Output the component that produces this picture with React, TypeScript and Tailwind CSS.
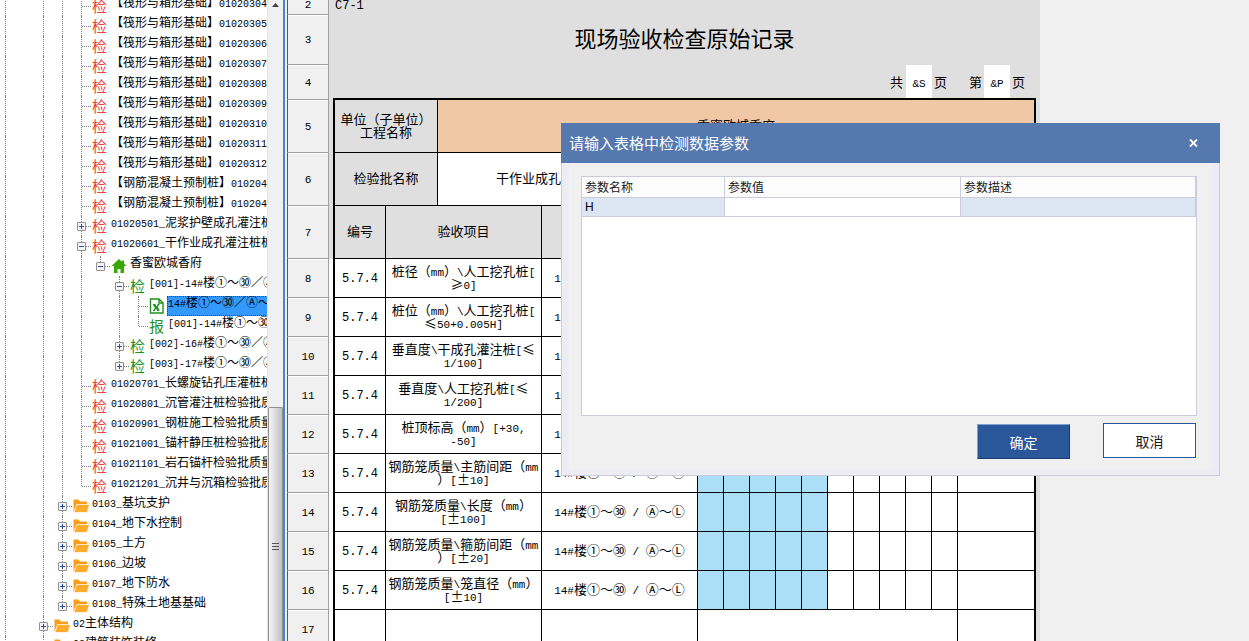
import { Fragment } from "react"
import type { ReactNode } from "react"

type Icon = "red" | "green" | "report" | "excel" | "home" | "folder"

type Node = {
    text: string
    icon: Icon
    level: number
    guides: number[]
    toggle?: "plus" | "minus"
    last?: boolean
    selected?: boolean
}

const check = (text: string, extra: Partial<Node> = {}): Node => ({
    text, icon: "red", level: 4, guides: [0, 2, 3], ...extra,
})

const folder = (text: string, extra: Partial<Node> = {}): Node => ({
    text, icon: "folder", level: 3, guides: [0, 2], toggle: "plus", ...extra,
})

const nodes: Node[] = [
    check("【筏形与箱形基础】01020304"),
    check("【筏形与箱形基础】01020305"),
    check("【筏形与箱形基础】01020306"),
    check("【筏形与箱形基础】01020307"),
    check("【筏形与箱形基础】01020308"),
    check("【筏形与箱形基础】01020309"),
    check("【筏形与箱形基础】01020310"),
    check("【筏形与箱形基础】01020311"),
    check("【筏形与箱形基础】01020312"),
    check("【钢筋混凝土预制桩】010204"),
    check("【钢筋混凝土预制桩】010204"),
    check("01020501_泥浆护壁成孔灌注桩", { toggle: "plus" }),
    check("01020601_干作业成孔灌注桩桩", { toggle: "minus" }),
    { text: "香蜜欧城香府", icon: "home", level: 5, guides: [0, 2, 3, 4], toggle: "minus", last: true },
    { text: "[001]-14#楼①～㉚／Ⓐ～Ⓛ", icon: "green", level: 6, guides: [0, 2, 3, 4], toggle: "minus" },
    { text: "14#楼①～㉚／Ⓐ～Ⓛ", icon: "excel", level: 7, guides: [0, 2, 3, 4, 6], selected: true },
    { text: "[001]-14#楼①～㉚", icon: "report", level: 7, guides: [0, 2, 3, 4, 6], last: true },
    { text: "[002]-16#楼①～㉚／Ⓐ～Ⓛ", icon: "green", level: 6, guides: [0, 2, 3, 4], toggle: "plus" },
    { text: "[003]-17#楼①～㉚／Ⓐ～Ⓛ", icon: "green", level: 6, guides: [0, 2, 3, 4], toggle: "plus", last: true },
    check("01020701_长螺旋钻孔压灌桩桩"),
    check("01020801_沉管灌注桩检验批质"),
    check("01020901_钢桩施工检验批质量"),
    check("01021001_锚杆静压桩检验批质"),
    check("01021101_岩石锚杆检验批质量"),
    check("01021201_沉井与沉箱检验批质", { last: true }),
    folder("0103_基坑支护"),
    folder("0104_地下水控制"),
    folder("0105_土方"),
    folder("0106_边坡"),
    folder("0107_地下防水"),
    folder("0108_特殊土地基基础", { last: true }),
    folder("02主体结构", { level: 2, guides: [0] }),
    folder("03建筑装饰装修", { level: 2, guides: [0] }),
]

// Half-width runs get the mono face, so that two of them fill one full-width cell
const Mixed = ({ text, size = "text-[10px]" }: { text: string; size?: string }) => (
    <>
        {text.split(/([\x20-\x7e]+)/).map((part, i) =>
            i % 2 ? (
                <span key={i} className={`font-['Liberation_Mono',monospace] leading-0 whitespace-pre ${size}`}>{part}</span>
            ) : (
                <Fragment key={i}>{part}</Fragment>
            )
        )}
    </>
)

const NodeIcon = ({ icon }: { icon: Icon }) => {
    if (icon === "red") return <span className="text-[15px] leading-4 text-[#f03c3c]">检</span>
    if (icon === "green") return <span className="text-[15px] leading-4 text-[#1f8f1f]">检</span>
    if (icon === "report") return <span className="text-[15px] leading-4 text-[#1f8f1f]">报</span>
    if (icon === "home") {
        return (
            <svg width="16" height="16" viewBox="0 0 16 16" fill="#39a900" aria-hidden="true">
                <path d="M8 1 0.5 8H3v7h3.5v-4h3v4H13V8h2.5L13 5.6V2.5h-2v1.3z" />
            </svg>
        )
    }
    if (icon === "excel") {
        return (
            <svg width="16" height="16" viewBox="0 0 16 16" fill="none" stroke="#1f8f1f" aria-hidden="true">
                <path d="M1.5 1h8.500L14 5V15H1.500zM10 1v4H14" fill="#fff" strokeWidth="1.400" />
                <path d="M5 7l4.500 5" strokeWidth="2.200" />
                <path d="M9.500 7l-4.500 5" strokeWidth="1.200" />
                <path d="M4 6.500h2.500M8.500 6.500h2M4 12.500h2M8 12.500h2.500" />
            </svg>
        )
    }
    return (
        <svg width="17" height="16" viewBox="0 0 17 16" aria-hidden="true">
            <path d="M0.500 14V1.500h5L7 3.500h7v3H4z" fill="#f99d1c" />
            <path d="M3.500 6.500H16.500L14 14.500H0.800z" fill="#ffab2e" stroke="#fff" strokeWidth="0.700" />
        </svg>
    )
}

const Toggle = ({ kind }: { kind: "plus" | "minus" }) => (
    <button
        type="button"
        aria-label={kind === "plus" ? "展开" : "收起"}
        className="absolute left-[5px] top-[6px] flex size-[9px] items-center justify-center rounded-[1px] border border-[#919191] bg-[#f4f4f4]"
    >
        <svg width="5" height="5" viewBox="0 0 5 5" fill="#2b4fa3" aria-hidden="true">
            <path d={kind === "plus" ? "M0 2h2V0h1v2h2v1H3v2H2V3H0z" : "M0 2h5v1H0z"} />
        </svg>
    </button>
)

const TreeRow = ({ node }: { node: Node }) => (
    <li className="flex h-5 whitespace-nowrap">
        {Array.from({ length: node.level }, (_, i) => (
            <span key={i} className="flex w-[19px] shrink-0 justify-center">
                {node.guides.includes(i) && <span className="w-0 border-l border-dotted border-[#808080]" />}
            </span>
        ))}
        <span className="relative flex w-[19px] shrink-0 pl-[9px]">
            <span className={`w-0 border-l border-dotted border-[#808080] ${node.last ? "h-[10px]" : "h-5"}`} />
            <span className="mt-[10px] h-0 flex-1 border-t border-dotted border-[#808080]" />
            {node.toggle && <Toggle kind={node.toggle} />}
        </span>
        <span className="flex w-[19px] shrink-0 items-center pl-px"><NodeIcon icon={node.icon} /></span>
        {node.selected ? (
            <span className="h-5 flex-1 bg-[#3399ff] pl-px leading-3 outline-1 -outline-offset-1 outline-dotted outline-[#1d3f66]">
                <Mixed text={node.text} />
            </span>
        ) : (
            <span className="pl-px leading-3"><Mixed text={node.text} /></span>
        )}
    </li>
)

const Tree = () => (
    <nav className="flex w-[287px] shrink-0 bg-white" aria-label="工程目录">
        <div className="min-w-0 flex-1 overflow-hidden">
            <ul className="-ml-1 -mt-1 text-xs">
                {nodes.map((node, i) => <TreeRow key={i} node={node} />)}
            </ul>
        </div>
        <div className="flex w-4 flex-col items-center border-l border-[#e4e4e4] bg-[#f0f0f0]">
            <svg className="mt-[3px] shrink-0" width="7" height="4" viewBox="0 0 7 4" aria-hidden="true">
                <path d="M3.500 0 7 4H0z" fill="#404040" />
            </svg>
            <div className="mt-[400px] flex min-h-0 w-full flex-1 flex-col items-center justify-center gap-[2px] rounded-t-[2px] border border-b-0 border-[#8f8f8f] bg-linear-to-r from-[#f5f5f5] to-[#bfc0c4] pt-11">
                <span className="h-px w-[7px] bg-[#555]" />
                <span className="h-px w-[7px] bg-[#555]" />
                <span className="h-px w-[7px] bg-[#555]" />
            </div>
        </div>
        <div className="w-1 border-l-2 border-[#4a84d4] bg-[#f0f0f0]" />
    </nav>
)

const grey = "bg-[#dfdfdf]"
const line = "border-b border-r border-black p-0 pb-[3px] text-center"
const pageCell = "border-b-2 border-black p-0"

const RowHead = ({ n, height }: { n: number; height: string }) => (
    <th scope="row" className={`border-b border-l border-r border-[#a0a0a0] border-l-[#5a5a5a] bg-[#f0f0f0] p-0 pb-1 font-normal shadow-[inset_0_1px_0_#fff] ${height}`}>
        <Mixed text={String(n)} size="text-[11px]" />
    </th>
)

const Gutter = ({ color = grey }: { color?: string }) => <td className={`p-0 ${color}`} />

const items = [
    { n: 8, lines: ["桩径（mm）\\人工挖孔桩[", "≥0]"] },
    { n: 9, lines: ["桩位（mm）\\人工挖孔桩[", "≤50+0.005H]"] },
    { n: 10, lines: ["垂直度\\干成孔灌注桩[≤", "1/100]"] },
    { n: 11, lines: ["垂直度\\人工挖孔桩[≤", "1/200]"] },
    { n: 12, lines: ["桩顶标高（mm）[+30,", "-50]"] },
    { n: 13, lines: ["钢筋笼质量\\主筋间距（mm", "）[±10]"] },
    { n: 14, lines: ["钢筋笼质量\\长度（mm）", "[±100]"] },
    { n: 15, lines: ["钢筋笼质量\\箍筋间距（mm", "）[±20]"] },
    { n: 16, lines: ["钢筋笼质量\\笼直径（mm）", "[±10]"] },
]

const Cell = ({ children, span = 1, className = "" }: { children?: ReactNode; span?: number; className?: string }) => (
    <td colSpan={span} className={`${line} ${className}`}>{children}</td>
)

const Sheet = () => (
    <table className="-mt-[6px] w-[753px] table-fixed border-separate border-spacing-0 self-start text-[13px] leading-[13px] text-black">
        <colgroup>
            <col className="w-[42px]" />
            <col className="w-1" />
            <col className="w-[53px]" />
            <col className="w-[52px]" />
            <col className="w-[104px]" />
            <col className="w-[156px]" />
            {Array.from({ length: 13 }, (_, i) => <col key={i} className="w-[26px]" />)}
            <col className="w-1" />
        </colgroup>
        <tbody>
            <tr>
                <RowHead n={2} height="h-[21px]" />
                <Gutter />
                <td colSpan={17} className={`p-0 pb-[3px] pl-[2px] ${grey}`}><Mixed text="C7-1" size="text-xs" /></td>
                <Gutter />
            </tr>
            <tr>
                <RowHead n={3} height="h-[50px]" />
                <Gutter />
                <td colSpan={17} className={`p-0 pb-[6px] text-center text-[22px] ${grey}`}>现场验收检查原始记录</td>
                <Gutter />
            </tr>
            <tr>
                <RowHead n={4} height="h-[35px]" />
                <Gutter />
                <td colSpan={12} className={`${pageCell} pr-[3px] text-right ${grey}`}>共</td>
                <td className={`${pageCell} bg-white text-center`}><Mixed text="&S" size="text-[11px]" /></td>
                <td className={`${pageCell} pl-[2px] ${grey}`}>页</td>
                <td className={`${pageCell} pr-[2px] text-right ${grey}`}>第</td>
                <td className={`${pageCell} bg-white text-center`}><Mixed text="&P" size="text-[11px]" /></td>
                <td className={`${pageCell} pl-[2px] ${grey}`}>页</td>
                <Gutter />
            </tr>
            <tr>
                <RowHead n={5} height="h-[53px]" />
                <Gutter />
                <Cell span={2} className={`border-l-2 ${grey}`}>单位（子单位）<br />工程名称</Cell>
                <Cell span={15} className="border-r-2 bg-[#f0c8a5]">香蜜欧城香府</Cell>
                <Gutter />
            </tr>
            <tr>
                <RowHead n={6} height="h-[53px]" />
                <Gutter />
                <Cell span={2} className={`border-l-2 ${grey}`}>检验批名称</Cell>
                <Cell span={2} className="bg-white">干作业成孔灌注桩检验批</Cell>
                <Cell span={13} className="border-r-2 bg-white" />
                <Gutter />
            </tr>
            <tr>
                <RowHead n={7} height="h-[53px]" />
                <Gutter />
                <Cell className={`border-l-2 ${grey}`}>编号</Cell>
                <Cell span={2} className={grey}>验收项目</Cell>
                <Cell className={grey} />
                <Cell span={10} className={grey} />
                <Cell span={3} className={`border-r-2 ${grey}`} />
                <Gutter />
            </tr>
            {items.map((item) => (
                <tr key={item.n}>
                    <RowHead n={item.n} height="h-[39px]" />
                    <Gutter color="bg-white" />
                    <Cell className="border-l-2 bg-white"><Mixed text="5.7.4" size="text-xs" /></Cell>
                    <Cell span={2} className="whitespace-nowrap bg-white">
                        <Mixed text={item.lines[0]} size="text-[11px]" /><br />
                        <Mixed text={item.lines[1]} size="text-[11px]" />
                    </Cell>
                    <Cell className="whitespace-nowrap bg-white"><Mixed text="14#楼①～㉚ / Ⓐ～Ⓛ" size="text-[11px]" /></Cell>
                    {Array.from({ length: 10 }, (_, i) => (
                        <Cell key={i} className={i < 5 ? "bg-[#addef7]" : "bg-white"} />
                    ))}
                    <Cell span={3} className="border-r-2 bg-white" />
                    <Gutter />
                </tr>
            ))}
            <tr>
                <RowHead n={17} height="h-[39px]" />
                <Gutter color="bg-white" />
                <Cell className="border-l-2 bg-white" />
                <Cell span={2} className="bg-white" />
                <Cell className="bg-white" />
                <Cell span={10} className="bg-white" />
                <Cell span={3} className="border-r-2 bg-white" />
                <Gutter />
            </tr>
        </tbody>
    </table>
)

const ParamDialog = () => (
    <div role="dialog" aria-labelledby="param-title" className="absolute left-[561px] top-[123px] flex h-[353px] w-[659px] flex-col">
        <header className="flex h-10 shrink-0 items-center justify-between bg-[#5578af] pl-2 pr-[22px] text-white">
            <h2 id="param-title" className="text-[15px] leading-5">请输入表格中检测数据参数</h2>
            <button type="button" aria-label="关闭">
                <svg width="9" height="8" viewBox="0 0 9 8" fill="none" stroke="#fff" strokeWidth="1.800" aria-hidden="true">
                    <path d="M1 0.500 8 7.500M8 0.500 1 7.500" />
                </svg>
            </button>
        </header>
        <div className="flex min-h-0 flex-1 flex-col border border-t-0 border-[#cbcbdc] bg-[#ececf2] px-[7px] pb-[6px]">
            <div className="flex flex-1 flex-col bg-[#f0f0f0] px-3 pt-[13px]">
                <div className="h-60 w-[616px] border border-[#cbcbdc] bg-white">
                    <table className="w-full table-fixed border-separate border-spacing-0 text-xs leading-4 text-[#1a1a1a]">
                        <colgroup>
                            <col className="w-[143px]" />
                            <col className="w-[236px]" />
                            <col />
                        </colgroup>
                        <thead>
                            <tr className="h-[21px] bg-[#fcfcfc] text-left">
                                <th className="border-b border-r border-[#cbcbdc] px-[3px] py-0 font-normal">参数名称</th>
                                <th className="border-b border-r border-[#cbcbdc] px-[3px] py-0 font-normal">参数值</th>
                                <th className="border-b border-r border-[#cbcbdc] px-[3px] py-0 font-normal">参数描述</th>
                            </tr>
                        </thead>
                        <tbody>
                            <tr className="h-[19px] bg-[#dce6f2]">
                                <td className="border-b border-r border-[#cbcbdc] px-[3px] py-0 font-['Liberation_Sans',sans-serif] text-black">H</td>
                                <td className="border-b border-r border-[#cbcbdc] bg-white p-0">
                                    <input aria-label="参数值" className="block h-[18px] w-full px-[3px] outline-none" />
                                </td>
                                <td className="border-b border-r border-[#cbcbdc] p-0" />
                            </tr>
                        </tbody>
                    </table>
                </div>
                <div className="mt-[7px] flex w-[615px] items-start justify-end gap-[33px] text-sm">
                    <button type="button" className="mt-px h-[35px] w-[93px] border border-b-[#1c3d6e] border-l-[#7ba0d4] border-r-[#1c3d6e] border-t-[#7ba0d4] bg-[#2a579a] text-white">
                        确定
                    </button>
                    <button type="button" className="h-[35px] w-[93px] border border-[#2a579a] bg-white text-[#1a1a1a]">
                        取消
                    </button>
                </div>
            </div>
        </div>
    </div>
)

export default function App() {
    return (
        <main className="relative flex h-screen w-full overflow-hidden bg-[#f0f0f0] font-['Noto_Sans_CJK_SC',sans-serif] text-black">
            <Tree />
            <Sheet />
            <ParamDialog />
        </main>
    )
}
